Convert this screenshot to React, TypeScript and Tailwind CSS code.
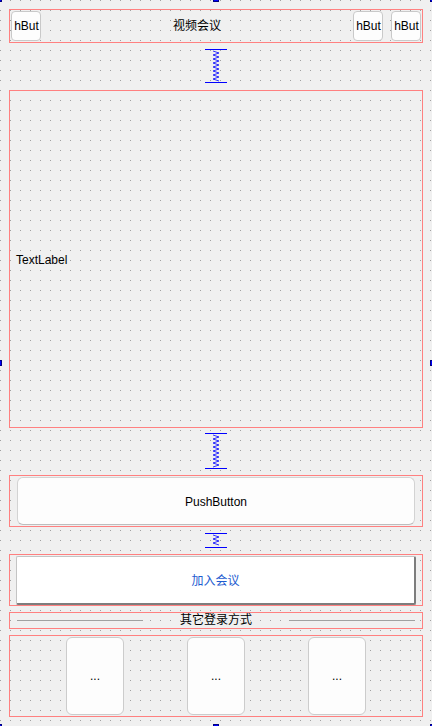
import React from 'react';

function Spacer({ h }: { h: number }) {
    // designer vertical spacer: caps top and bottom, spring in between
    const pts: string[] = [];
    for (let y = 2, i = 0; y <= h - 2; y += 2, i++) {
        pts.push(`${i % 2 === 0 ? 8 : 14},${y}`);
    }
    return (
        <svg width="22" height={h} viewBox={`0 0 22 ${h}`} className="block">
            <line x1="0" y1="0.5" x2="22" y2="0.5" stroke="#0000ff" strokeWidth="1" />
            <line x1="0" y1={h - 0.5} x2="22" y2={h - 0.5} stroke="#0000ff" strokeWidth="1" />
            <polyline points={pts.join(' ')} fill="none" stroke="#0000ff" strokeWidth="0.8" />
        </svg>
    );
}

function SmallButton() {
    return (
        <div className="w-[30px] h-[30px] overflow-hidden rounded-[4px] border border-[#c9c9c9] bg-[#fdfdfd] flex items-center justify-center whitespace-nowrap">
            <span className="pl-[1px]">hBut</span>
        </div>
    );
}

function Handle({ className }: { className: string }) {
    return <div className={'absolute w-[6px] h-[6px] bg-[#0000ff] border border-[#000080] ' + className} />;
}

export default function App() {
    return (
        <div className="relative w-[432px] h-[726px] overflow-hidden bg-[#f0f0f0] bg-[conic-gradient(from_270deg_at_1px_1px,#a0a0a0_90deg,transparent_0)] bg-[length:10px_10px] font-['Liberation_Sans','Noto_Sans_CJK_SC',sans-serif] text-[12px] text-black">
            <div className="flex flex-col px-[9px] pt-[9px]">
                {/* title bar */}
                <div className="h-[34px] border border-[#ff8080] flex items-start pt-[1px] px-[1px]">
                    <SmallButton />
                    <div className="flex-1 h-[30px] flex items-center justify-center">视频会议</div>
                    <div className="flex gap-[8px]">
                        <SmallButton />
                        <SmallButton />
                    </div>
                </div>

                <div className="h-[47px] pt-[6px] flex justify-center items-start">
                    <Spacer h={34} />
                </div>

                {/* label area */}
                <div className="h-[338px] border border-[#ff8080] flex items-center pl-[6px] pt-[2px]">
                    TextLabel
                </div>

                <div className="h-[47px] pt-[5px] flex justify-center items-start">
                    <Spacer h={36} />
                </div>

                <div className="h-[52px] border border-[#ff8080] px-[7px] pt-[1px]">
                    <button className="w-full h-[48px] pt-[2px] rounded-[6px] border border-[#d3d3d3] border-b-[#bdbdbd] bg-[#fdfdfd] text-[12px] text-black">
                        PushButton
                    </button>
                </div>

                <div className="h-[27px] pt-[6px] flex justify-center items-start">
                    <Spacer h={15} />
                </div>

                <div className="h-[52px] border border-[#ff8080] px-[6px] pt-[1px]">
                    <button className="w-full h-[49px] pt-[2px] rounded-[2px] border border-[#c4c4c4] border-r-2 border-b-2 border-r-[#7d7d7d] border-b-[#7d7d7d] bg-white text-[12px] text-[#1d5bd0]">
                        加入会议
                    </button>
                </div>

                <div className="h-[6px]" />

                <div className="h-[17px] border border-[#ff8080] px-[7px] flex items-center">
                    <div className="flex-1 h-[1px] bg-[#a0a0a0]" />
                    <div className="w-[146px] text-center leading-[15px]">其它登录方式</div>
                    <div className="flex-1 h-[1px] bg-[#a0a0a0]" />
                </div>

                <div className="h-[6px]" />

                <div className="h-[82px] border border-[#ff8080] px-[56px] pt-[1px] flex justify-between items-start">
                    <div className="w-[58px] h-[78px] rounded-[6px] border border-[#cccccc] bg-[#fdfdfd] flex items-center justify-center">...</div>
                    <div className="w-[58px] h-[78px] rounded-[6px] border border-[#cccccc] bg-[#fdfdfd] flex items-center justify-center">...</div>
                    <div className="w-[58px] h-[78px] rounded-[6px] border border-[#cccccc] bg-[#fdfdfd] flex items-center justify-center">...</div>
                </div>
            </div>

            {/* selection handles */}
            <Handle className="left-[-4px] top-[-4px]" />
            <Handle className="left-[213px] top-[-4px]" />
            <Handle className="left-[430px] top-[-4px]" />
            <Handle className="left-[-4px] top-[360px]" />
            <Handle className="left-[430px] top-[360px]" />
            <Handle className="left-[-4px] top-[724px]" />
            <Handle className="left-[213px] top-[724px]" />
            <Handle className="left-[430px] top-[724px]" />
        </div>
    );
}
